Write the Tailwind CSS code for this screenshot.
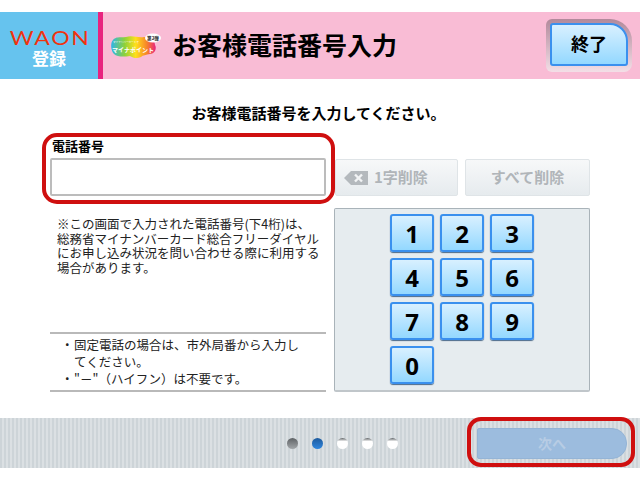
<!DOCTYPE html>
<html lang="ja">
<head>
  <meta charset="UTF-8">
  <title>お客様電話番号入力</title>
  <script src="https://cdn.jsdelivr.net/npm/@tailwindcss/browser@4"></script>
</head>
<body class="relative w-[640px] h-[480px] overflow-hidden bg-white text-black [font-family:'Noto_Sans_CJK_JP',sans-serif]">
  <div class="flex flex-col h-[480px] py-[12px]">
    <!-- header -->
    <header class="flex h-[67px] shrink-0 bg-[#f9bcd5]">
      <div class="w-[98px] flex flex-col items-center bg-[#66c3ee] pt-[13px]">
        <span class="h-[24px] ml-[2px] leading-[24px] text-[20px] tracking-[1.5px] text-[#f0330f] font-normal scale-x-[1.15] [font-family:'Lato',sans-serif]">WAON</span>
        <span class="text-[17px] leading-[18px] font-bold text-white">登録</span>
      </div>
      <div class="w-[5px] bg-[#e8237f]"></div>
      <div class="flex items-center flex-1 pl-[7px]">
        <svg class="w-[52px] h-[26px]" viewBox="0 0 52 26">
          <defs>
            <linearGradient id="rb" x1="0" x2="1" y1="0" y2="0">
              <stop offset="0" stop-color="#2fb5e8"/>
              <stop offset="0.3" stop-color="#8cd13a"/>
              <stop offset="0.55" stop-color="#ffe01a"/>
              <stop offset="0.8" stop-color="#f7842a"/>
              <stop offset="1" stop-color="#e8237f"/>
            </linearGradient>
          </defs>
          <path d="M3 7C6 3 12 5 16 4C22 2 28 5 34 4C40 4 45 7 45 12C47 15 45 21 40 21C36 22 33 22 31 24C27 26 23 25 20 23C14 24 7 24 4 21C1 18 0 10 3 7Z" fill="url(#rb)"/>
          <ellipse cx="43" cy="5" rx="8" ry="4.5" fill="#fff"/>
          <text x="43" y="7" text-anchor="middle" font-size="4.6" font-weight="700" fill="#222">第2弾</text>
          <text x="3" y="10" font-size="2.6" fill="#fff">マイナンバーカードで</text>
          <text x="2" y="18.5" font-size="6" font-weight="700" fill="#fff">マイナポイント</text>
        </svg>
        <h1 class="ml-[10px] mb-[3px] text-[25px] leading-[30px] font-bold">お客様電話番号入力</h1>
        <div class="ml-auto mr-[8px] mb-[1px] w-[86px] h-[53px] p-[4px] pb-[5px] rounded-[6px] rounded-tr-[22px] rounded-br-[8px] bg-gradient-to-b from-[#b2899b] to-[#f3dfe7]">
          <button class="w-[78px] h-[43px] pb-[2px] rounded-[3px] rounded-tr-[18px] border-2 border-[#3a90ee] bg-gradient-to-b from-[#d8f0ff] to-[#93d8ff] text-[18px] font-bold">終了</button>
        </div>
      </div>
    </header>

    <!-- main -->
    <main class="flex flex-col flex-1">
      <p class="h-[58px] pt-[23px] pr-[3px] text-center text-[15px] leading-[21px] font-semibold">お客様電話番号を入力してください。</p>
      <div class="flex flex-1 pl-[50px] pb-[26px]">
        <div class="flex flex-col w-[276px]">
          <label class="h-[21px] pl-[2px] text-[13px] leading-[17px] font-bold">電話番号</label>
          <div class="h-[38px] rounded-[2px] border-2 border-[#bcbcbc] bg-white"></div>
          <p class="mt-[21px] pl-[7px] text-[12.5px] leading-[14.7px] text-[#222]">※この画面で入力された電話番号(下4桁)は、<br>総務省マイナンバーカード総合フリーダイヤル<br>にお申し込み状況を問い合わせる際に利用する<br>場合があります。</p>
          <div class="mt-auto h-[60px] border-y-2 border-[#b9b9b9] pl-[16px] pt-[2px] text-[12.5px] leading-[17px] text-[#222]">
            <p class="flex"><span class="shrink-0 -ml-[5px] mr-[0.5px]">・</span><span>固定電話の場合は、市外局番から入力し<br>てください。</span></p>
            <p class="flex"><span class="shrink-0 -ml-[5px] mr-[0.5px]">・</span><span>"－"（ハイフン）は不要です。</span></p>
          </div>
        </div>
        <div class="flex flex-col w-[256px] ml-[8px] pt-[22px]">
          <div class="flex gap-[7px] pl-[1px] h-[37px] text-[15px] font-bold text-[#b0b5b9]">
            <button class="flex items-center w-[123px] pl-[8px] rounded-[2px] border border-[#dfe4e7] bg-gradient-to-b from-[#f7f8f9] to-[#e6ebee]">
              <svg class="w-[24px] h-[14px] mr-[6px]" viewBox="0 0 24 14"><path d="M0 7L7 0H24V14H7Z" fill="#b4b9bd"/><path d="M11 3.5L18 10.5M18 3.5L11 10.5" stroke="#f2f4f5" stroke-width="2.4"/></svg>
              1字削除
            </button>
            <button class="w-[125px] rounded-[2px] border border-[#dfe4e7] bg-gradient-to-b from-[#f7f8f9] to-[#e6ebee]">すべて削除</button>
          </div>
          <div class="mt-[12px] h-[184px] rounded-[2px] border border-[#a9b3b9] border-b-2 border-b-[#c0c6ca] bg-[#e6ecef] pl-[55px] pt-[5px]">
            <div class="grid grid-cols-[44px_44px_44px] auto-rows-[38px] gap-x-[6px] gap-y-[6px] [font-family:'Open_Sans',sans-serif] text-[24px] font-bold">
              <button class="rounded-[3px] border-2 border-[#3a90ee] shadow-[0_1px_1px_#4a6a8a] bg-gradient-to-b from-[#d8f0ff] to-[#93d8ff]">1</button>
              <button class="rounded-[3px] border-2 border-[#3a90ee] shadow-[0_1px_1px_#4a6a8a] bg-gradient-to-b from-[#d8f0ff] to-[#93d8ff]">2</button>
              <button class="rounded-[3px] border-2 border-[#3a90ee] shadow-[0_1px_1px_#4a6a8a] bg-gradient-to-b from-[#d8f0ff] to-[#93d8ff]">3</button>
              <button class="rounded-[3px] border-2 border-[#3a90ee] shadow-[0_1px_1px_#4a6a8a] bg-gradient-to-b from-[#d8f0ff] to-[#93d8ff]">4</button>
              <button class="rounded-[3px] border-2 border-[#3a90ee] shadow-[0_1px_1px_#4a6a8a] bg-gradient-to-b from-[#d8f0ff] to-[#93d8ff]">5</button>
              <button class="rounded-[3px] border-2 border-[#3a90ee] shadow-[0_1px_1px_#4a6a8a] bg-gradient-to-b from-[#d8f0ff] to-[#93d8ff]">6</button>
              <button class="rounded-[3px] border-2 border-[#3a90ee] shadow-[0_1px_1px_#4a6a8a] bg-gradient-to-b from-[#d8f0ff] to-[#93d8ff]">7</button>
              <button class="rounded-[3px] border-2 border-[#3a90ee] shadow-[0_1px_1px_#4a6a8a] bg-gradient-to-b from-[#d8f0ff] to-[#93d8ff]">8</button>
              <button class="rounded-[3px] border-2 border-[#3a90ee] shadow-[0_1px_1px_#4a6a8a] bg-gradient-to-b from-[#d8f0ff] to-[#93d8ff]">9</button>
              <button class="rounded-[3px] border-2 border-[#3a90ee] shadow-[0_1px_1px_#4a6a8a] bg-gradient-to-b from-[#d8f0ff] to-[#93d8ff]">0</button>
            </div>
          </div>
        </div>
      </div>
    </main>

    <!-- footer -->
    <footer class="flex items-center h-[50px] shrink-0 pl-[287px] bg-[repeating-linear-gradient(90deg,#cdd4d8_0,#cdd4d8_2px,#dbe0e3_2px,#dbe0e3_4px)]">
      <div class="flex gap-[14px] w-[190px]">
        <span class="w-[11px] h-[11px] rounded-full bg-gradient-to-b from-[#5f6366] to-[#a3a7aa]"></span>
        <span class="w-[11px] h-[11px] rounded-full bg-gradient-to-b from-[#1d5b9e] to-[#2f86de]"></span>
        <span class="w-[11px] h-[11px] rounded-full bg-gradient-to-b from-[#5f6366] to-white to-30%"></span>
        <span class="w-[11px] h-[11px] rounded-full bg-gradient-to-b from-[#5f6366] to-white to-30%"></span>
        <span class="w-[11px] h-[11px] rounded-full bg-gradient-to-b from-[#5f6366] to-white to-30%"></span>
      </div>
      <button class="w-[150px] h-[31px] rounded-[2px] rounded-r-[15px] border border-[#94b4d6] bg-[#9cbcde] text-[14px] font-bold text-[#b7cce4]">次へ</button>
    </footer>
  </div>

  <!-- red highlight outlines -->
  <div class="absolute left-[42px] top-[133px] w-[293px] h-[71px] rounded-[15px] border-4 border-[#cf0f0f]"></div>
  <div class="absolute left-[467px] top-[417px] w-[168px] h-[50px] rounded-[14px] border-4 border-[#cf0f0f]"></div>
</body>
</html>
